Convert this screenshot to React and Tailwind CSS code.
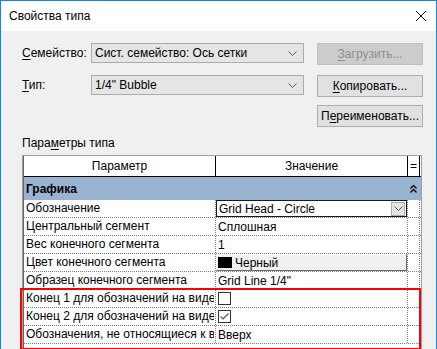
import React from "react";

const FONT = { fontFamily: '"Liberation Sans", "Noto Sans", sans-serif' };

function ChevronDown() {
  return (
    <svg width="9" height="5" viewBox="0 0 9 5" aria-hidden="true">
      <path d="M0.5 0.5 L4.5 4.5 L8.5 0.5" fill="none" stroke="#5b5b5b" strokeWidth="1" />
    </svg>
  );
}

function Combo({ children }) {
  return (
    <div className="w-[213px] h-[20px] border border-[#acacac] bg-[#e5e5e5] flex items-center justify-between pl-[3px] pr-[6px]">
      <span>{children}</span>
      <ChevronDown />
    </div>
  );
}

function Btn({ children, disabled = false }) {
  return (
    <div
      className={
        disabled
          ? "w-[106px] h-[22px] border border-[#bfbfbf] bg-[#cccccc] text-[#8d8d8d] flex items-center justify-center"
          : "w-[106px] h-[22px] border border-[#adadad] bg-[#e1e1e1] flex items-center justify-center"
      }
    >
      {children}
    </div>
  );
}

function Row({ label, children }) {
  return (
    <div className="grid grid-cols-[192px_192px_12px_1px] h-[18px] border-b border-dotted border-[#808080]">
      <div className="pl-[2px] leading-[17px] whitespace-nowrap overflow-hidden border-r border-dotted border-[#808080]">
        <span className="block w-[188px] overflow-hidden">{label}</span>
      </div>
      <div className="h-[17px] border-r border-dotted border-[#808080] flex items-center">
        {children}
      </div>
      <div className="border-r border-dotted border-[#808080]" />
      <div />
    </div>
  );
}

function CheckBox({ checked }) {
  return (
    <div className="ml-[2px] w-[13px] h-[13px] border border-[#333333] bg-white flex items-center justify-center">
      {checked && (
        <svg width="11" height="11" viewBox="0 0 11 11" aria-hidden="true">
          <path d="M1.5 5.5 L4 8 L9.5 2.5" fill="none" stroke="#555555" strokeWidth="1.2" />
        </svg>
      )}
    </div>
  );
}

export default function App() {
  return (
    <div
      className="relative w-[437px] h-[349px] overflow-hidden bg-[#f0f0f0] border-x border-t border-[#1883d7] text-[12px] text-black"
      style={FONT}
    >
      <div className="h-[30px] bg-white flex items-center justify-between pl-[8px] pr-[10px]">
        <span>Свойства типа</span>
        <svg width="10" height="10" viewBox="0 0 10 10" aria-hidden="true">
          <path d="M0 0 L10 10 M10 0 L0 10" stroke="#111" strokeWidth="1" />
        </svg>
      </div>

      <div className="pl-[21px] pt-[12px]">
        <div className="flex items-start h-[22px]">
          <div className="w-[69px] h-[20px] flex items-center">
            <span><u className="underline-offset-2">С</u>емейство:</span>
          </div>
          <Combo>Сист. семейство: Ось сетки</Combo>
          <div className="ml-[13px]">
            <Btn disabled><span><u className="underline-offset-2">З</u>агрузить...</span></Btn>
          </div>
        </div>

        <div className="flex items-start h-[22px] mt-[10px]">
          <div className="w-[69px] h-[20px] flex items-center">
            <span><u className="underline-offset-2">Т</u>ип:</span>
          </div>
          <Combo>1/4" Bubble</Combo>
          <div className="ml-[13px]">
            <Btn><span><u className="underline-offset-2">К</u>опировать...</span></Btn>
          </div>
        </div>

        <div className="flex h-[22px] mt-[8px] pl-[295px]">
          <Btn><span>П<u className="underline-offset-2">е</u>реименовать...</span></Btn>
        </div>

        <div className="mt-[8px] h-[16px] leading-[16px]">
          Пара<u className="underline-offset-2">м</u>етры типа
        </div>

        <div className="mt-[4px] w-[400px] border-x border-t border-[#a0a0a0] bg-white">
          <div className="border-l border-[#646464]">
            <div className="grid grid-cols-[192px_192px_12px_1px] h-[21px] border-b border-black">
              <div className="border-r border-black flex items-center justify-center">Параметр</div>
              <div className="border-r border-black flex items-center justify-center">Значение</div>
              <div className="border-r border-black flex items-center justify-center">=</div>
              <div />
            </div>

            <div className="h-[23px] bg-[#99b4d1] flex items-center justify-between pl-[2px] pr-[4px]">
              <span className="font-bold">Графика</span>
              <svg width="7" height="8" viewBox="0 0 7 8" aria-hidden="true">
                <path d="M0.5 3.5 L3.5 0.5 L6.5 3.5 M0.5 7.5 L3.5 4.5 L6.5 7.5" fill="none" stroke="#000" strokeWidth="1.3" />
              </svg>
            </div>

            <Row label="Обозначение">
              <div className="w-full h-[17px] border border-[#1a1a1a] bg-white flex items-center justify-between pl-[2px] pr-[1px]">
                <span>Grid Head - Circle</span>
                <div className="w-[14px] h-[14px] bg-[#e5e5e5] border border-[#acacac] flex items-center justify-center">
                  <ChevronDown />
                </div>
              </div>
            </Row>
            <Row label="Центральный сегмент">
              <span className="pl-[2px]">Сплошная</span>
            </Row>
            <Row label="Вес конечного сегмента">
              <span className="pl-[2px]">1</span>
            </Row>
            <Row label="Цвет конечного сегмента">
              <div className="w-full h-[17px] bg-[#f0f0f0] border border-t-white border-l-white border-r-[#696969] border-b-[#696969] flex items-center pl-[1px] gap-[3px]">
                <div className="w-[14px] h-[11px] bg-black" />
                <span>Черный</span>
              </div>
            </Row>
            <Row label="Образец конечного сегмента">
              <span className="pl-[2px]">Grid Line 1/4"</span>
            </Row>
            <Row label="Конец 1 для обозначений на виде">
              <CheckBox />
            </Row>
            <Row label="Конец 2 для обозначений на виде">
              <CheckBox checked />
            </Row>
            <Row label="Обозначения, не относящиеся к виду">
              <span className="pl-[2px]">Вверх</span>
            </Row>
            <div className="h-[10px]" />
          </div>
        </div>
      </div>

      <div className="absolute left-[19px] top-[287px] w-[401px] h-[62px] border-2 border-[#ff0000]" />
    </div>
  );
}
